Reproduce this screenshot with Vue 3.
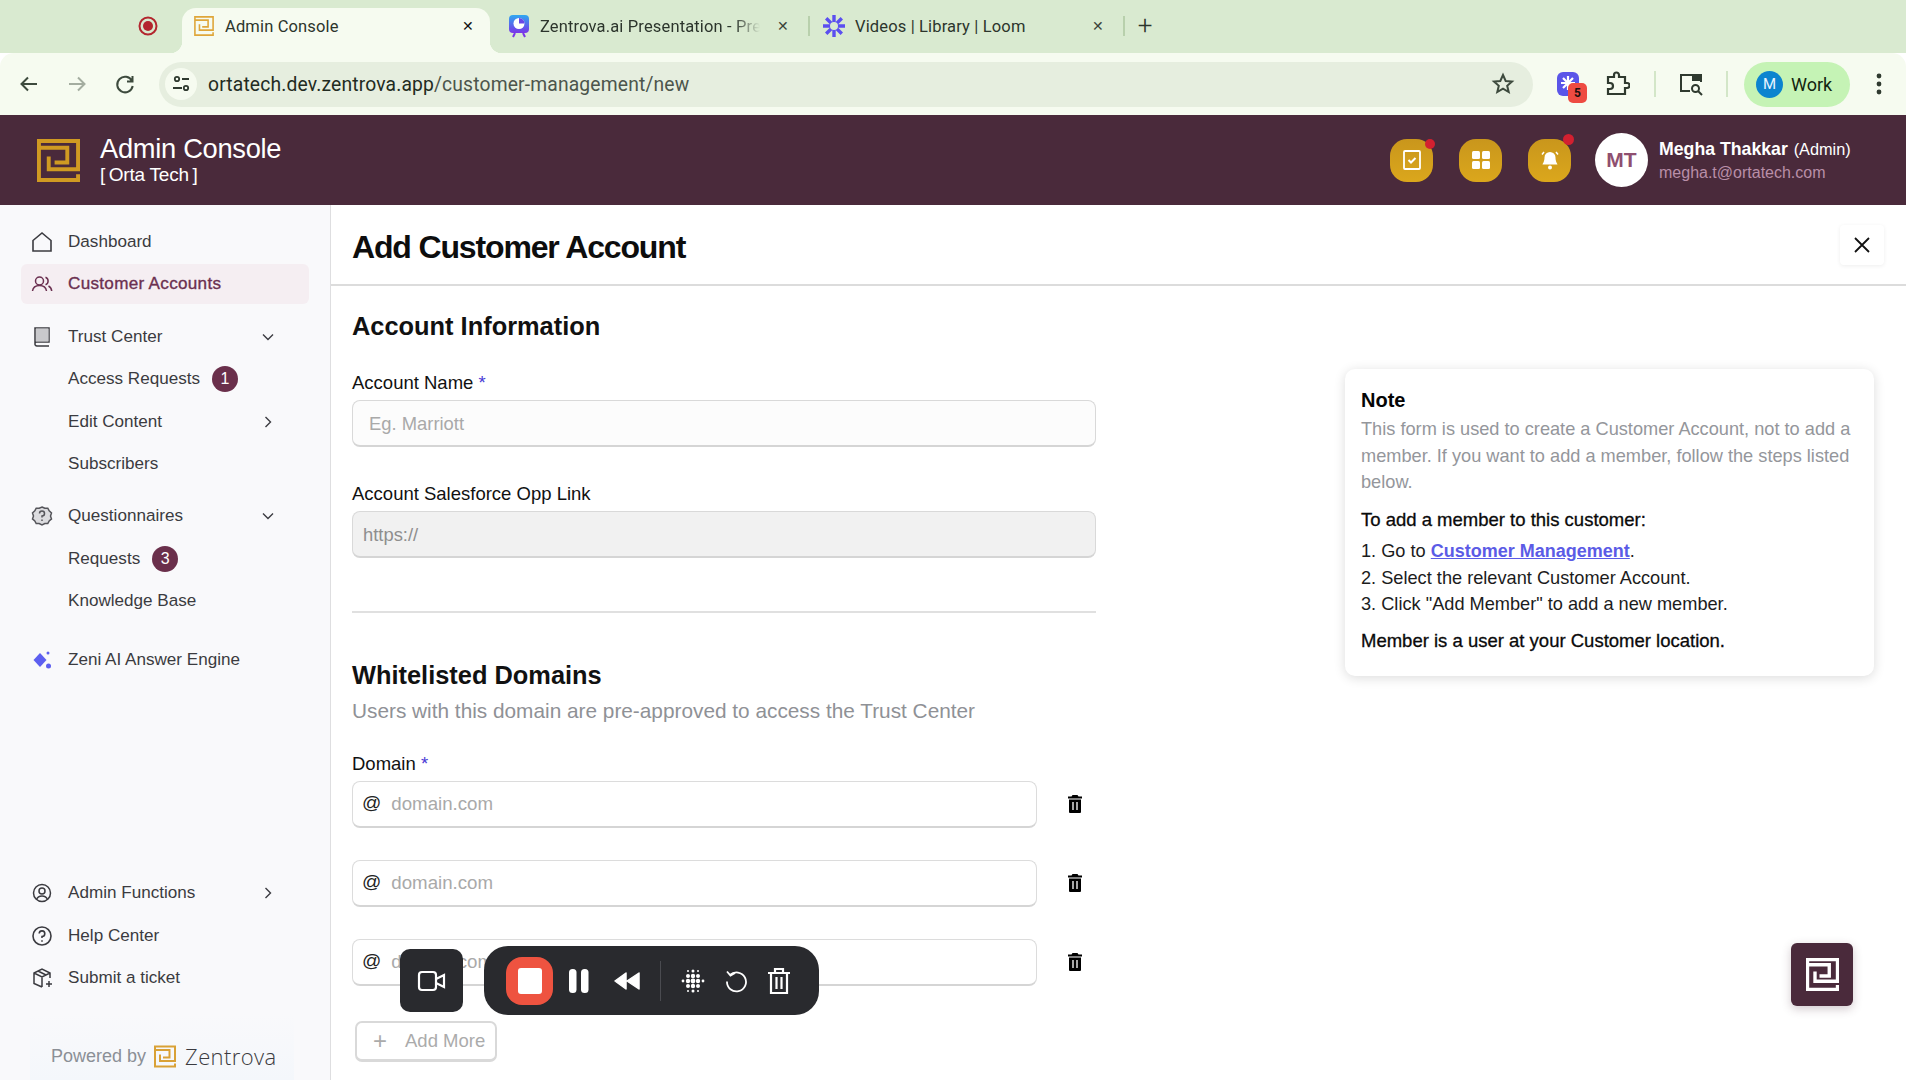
<script setup>
const logoD = 'M2 9V2H42V31H12V18M2 9H31V24H18M2 9V42H42V36';
const domains = [1, 2, 3];
</script>

<template>
  <div class="page">
    <div class="tabstrip">
      <svg class="rec" width="20" height="20" viewBox="0 0 20 20"><circle cx="10" cy="10" r="8.5" fill="none" stroke="#b3262e" stroke-width="2"/><circle cx="10" cy="10" r="5" fill="#b3262e"/></svg>
      <div class="tab active">
        <svg class="fav" width="20" height="20" viewBox="0 0 44 44" fill="none" stroke="#dfa63a" stroke-width="3.5"><path :d="logoD"/></svg>
        <span class="tab-text">Admin Console</span>
        <span class="x dark">✕</span>
      </div>
      <div class="tab t2">
        <svg class="fav" width="22" height="24" viewBox="0 0 22 24"><defs><linearGradient id="g1" x1="0" y1="0" x2="0" y2="1"><stop offset="0" stop-color="#2fa8f0"/><stop offset="1" stop-color="#7a35e8"/></linearGradient></defs><rect x="1" y="1" width="20" height="18" rx="4" fill="url(#g1)"/><circle cx="11" cy="9.5" r="5.5" fill="#fff"/><path d="M11 9.5V4a5.5 5.5 0 0 1 5.5 5.5z" fill="#6a47e6"/><path d="M7 19l-2 4M15 19l2 4" stroke="#7a35e8" stroke-width="2"/></svg>
        <span class="tab-text fade">Zentrova.ai Presentation - Pre</span>
        <span class="x">✕</span>
      </div>
      <i class="sep"></i>
      <div class="tab t3">
        <svg class="fav" width="24" height="24" viewBox="0 0 24 24" fill="none" stroke="#5b4ff0" stroke-width="3.4"><path d="M12 1v22M1 12h22M4.2 4.2l15.6 15.6M19.8 4.2L4.2 19.8"/><circle cx="12" cy="12" r="4" fill="#d9ead0" stroke="none"/></svg>
        <span class="tab-text">Videos | Library | Loom</span>
        <span class="x">✕</span>
      </div>
      <i class="sep"></i>
      <span class="plus">+</span>
    </div>

    <div class="toolbar">
      <svg class="tb first" width="24" height="24" viewBox="0 0 24 24" fill="none" stroke="#3d4a3d" stroke-width="2"><path d="M20 12H5M11 5.5L4.5 12l6.5 6.5"/></svg>
      <svg class="tb" width="24" height="24" viewBox="0 0 24 24" fill="none" stroke="#a4ada0" stroke-width="2"><path d="M4 12h15M13 5.5l6.500 6.500-6.500 6.500"/></svg>
      <svg class="tb" width="24" height="24" viewBox="0 0 24 24" fill="none" stroke="#3d4a3d" stroke-width="2"><path d="M19 9A7.800 7.800 0 1 0 19.700 14M19.500 4v5.500H14"/></svg>
      <div class="omnibox">
        <span class="tune"><svg width="20" height="20" viewBox="0 0 20 20" fill="none" stroke="#2f3a2f" stroke-width="1.800"><circle cx="6" cy="5" r="2.200"/><path d="M11 5h7M2 14h9"/><circle cx="15" cy="14" r="2.200"/></svg></span>
        <span class="url">ortatech.dev.zentrova.app<span class="url-rest">/customer-management/new</span></span>
        <svg class="star" width="24" height="24" viewBox="0 0 24 24" fill="none" stroke="#3d4a3d" stroke-width="2"><path d="M12 3l2.700 6 6.300.6-4.800 4.200 1.500 6.200L12 16.700 6.300 20l1.500-6.200L3 9.600 9.300 9z"/></svg>
      </div>
      <div class="ext">
        <svg width="24" height="24" viewBox="0 0 24 24"><rect width="22" height="24" rx="6" fill="#5a55e8"/><path d="M11 4v14M4 11h14M6 6l10 10M16 6L6 16" stroke="#fff" stroke-width="2.200"/></svg>
        <span class="ext-badge">5</span>
      </div>
      <svg class="puzzle" width="24" height="26" viewBox="0 0 24 26" fill="none" stroke="#2f3a2f" stroke-width="2.200"><path d="M2 6h6V4a2.500 2.500 0 0 1 5 0v2h6v6h2a2.500 2.500 0 0 1 0 5h-2v6H2v-5h2a2.500 2.500 0 0 0 0-6H2z"/></svg>
      <i class="sep s1"></i>
      <svg class="media" width="24" height="24" viewBox="0 0 24 24" fill="none" stroke="#2f3a2f" stroke-width="2"><path d="M11 19H2V3h20v7"/><rect x="14" y="3" width="8" height="5" fill="#2f3a2f"/><circle cx="16.500" cy="16.500" r="3.500"/><path d="M19 19l4 4"/></svg>
      <i class="sep s2"></i>
      <div class="profile"><span class="pm">M</span><span class="pw">Work</span></div>
      <svg class="dots" width="6" height="22" viewBox="0 0 6 22" fill="#2f3a2f"><circle cx="3" cy="3" r="2.400"/><circle cx="3" cy="11" r="2.400"/><circle cx="3" cy="19" r="2.400"/></svg>
    </div>

    <header class="appbar">
      <svg class="applogo" width="43" height="45" viewBox="0 0 44 44" fill="none" stroke="#d09a22" stroke-width="4"><path :d="logoD"/></svg>
      <div class="appname">
        <div class="an1">Admin Console</div>
        <div class="an2">[&#8201;Orta Tech&#8201;]</div>
      </div>
      <div class="hicons">
        <span class="hb dot1"><svg width="20" height="22" viewBox="0 0 20 22" fill="none" stroke="#fff" stroke-width="1.800"><rect x="2" y="2" width="16" height="18" rx="1"/><path d="M6.500 11l2.500 2.500 4.500-4.500" stroke-width="2"/></svg></span>
        <span class="hb"><svg width="20" height="20" viewBox="0 0 20 20" fill="#fff"><rect x="1" y="1" width="8" height="8" rx="1.500"/><rect x="11" y="1" width="8" height="8" rx="1.500"/><rect x="1" y="11" width="8" height="8" rx="1.500"/><rect x="11" y="11" width="8" height="8" rx="1.500"/></svg></span>
        <span class="hb dot2"><svg width="22" height="22" viewBox="0 0 22 22" fill="#fff"><path d="M11 3a5.500 5.500 0 0 0-5.500 5.500c0 4-1.500 5.500-2 7h15c-.5-1.500-2-3-2-7A5.500 5.500 0 0 0 11 3z"/><circle cx="11" cy="18.500" r="2"/><path d="M3 5.500L5 3M19 5.500L17 3" stroke="#fff" stroke-width="1.500"/></svg></span>
      </div>
      <div class="avatar">MT</div>
      <div class="user">
        <div class="uname"><b>Megha Thakkar</b> <span>(Admin)</span></div>
        <div class="umail">megha.t@ortatech.com</div>
      </div>
    </header>

    <div class="body">
      <aside class="side">
        <div class="item">
          <svg class="ic" width="22" height="22" viewBox="0 0 22 22" fill="none" stroke="#3b3b40" stroke-width="1.600"><path d="M2 20V9.500L11 2l9 7.500V20z"/></svg>
          <span>Dashboard</span>
        </div>
        <div class="item on">
          <svg class="ic" width="22" height="22" viewBox="0 0 22 22" fill="none" stroke="#6b3050" stroke-width="1.500"><circle cx="8.500" cy="8" r="4"/><path d="M1.500 18c.5-3.500 3.500-5.500 7-5.500s6.500 2 7 5.500M14.500 4.200a4 4 0 0 1 0 7.500M17.500 13c1.800 1 3 2.800 3.200 5"/></svg>
          <span>Customer Accounts</span>
        </div>
        <div class="item g1">
          <svg class="ic" width="22" height="22" viewBox="0 0 22 22" fill="none" stroke="#3b3b40" stroke-width="1.500"><path d="M4 18V2h14v14H5.500A1.500 1.500 0 0 0 4 17.500 2 2 0 0 0 6 20h12" fill="none"/><path d="M5 2.500h12.500v13H5z" fill="#c9c9cc" stroke="none"/></svg>
          <span>Trust Center</span>
          <svg class="chev" width="14" height="14" viewBox="0 0 14 14" fill="none" stroke="#3b3b40" stroke-width="1.400"><path d="M2 4.500l5 5 5-5"/></svg>
        </div>
        <div class="item">
          <span>Access Requests</span><span class="badge">1</span>
        </div>
        <div class="item">
          <span>Edit Content</span>
          <svg class="chev" width="14" height="14" viewBox="0 0 14 14" fill="none" stroke="#3b3b40" stroke-width="1.400"><path d="M4.500 2l5 5-5 5"/></svg>
        </div>
        <div class="item"><span>Subscribers</span></div>
        <div class="item g1">
          <svg class="ic" width="22" height="22" viewBox="0 0 22 22" fill="none" stroke="#55555a" stroke-width="1.500"><path d="M11 2l2.800 1.300 3-.1 1.400 2.700 2.300 2-1 3 1 3-2.300 2-1.400 2.700-3-.1L11 20l-2.800-1.500-3 .1-1.400-2.700-2.300-2 1-3-1-3 2.300-2 1.400-2.700 3 .1z" fill="#dcdcdf"/><path d="M8.500 8.500A2.500 2.500 0 1 1 11 11v1.500M11 14.500v1.500"/></svg>
          <span>Questionnaires</span>
          <svg class="chev" width="14" height="14" viewBox="0 0 14 14" fill="none" stroke="#3b3b40" stroke-width="1.400"><path d="M2 4.500l5 5 5-5"/></svg>
        </div>
        <div class="item"><span>Requests</span><span class="badge">3</span></div>
        <div class="item"><span>Knowledge Base</span></div>
        <div class="item g2">
          <svg class="ic" width="22" height="22" viewBox="0 0 22 22" fill="#5d5ff0"><path d="M9 4l6.500 7L9 18l-6.500-7z"/><circle cx="17" cy="4" r="1.500"/><circle cx="17.500" cy="17" r="2.500"/></svg>
          <span>Zeni AI Answer Engine</span>
        </div>

        <div class="side-bottom">
          <div class="item">
            <svg class="ic" width="22" height="22" viewBox="0 0 22 22" fill="none" stroke="#3b3b40" stroke-width="1.500"><circle cx="11" cy="11" r="8.500"/><circle cx="11" cy="9" r="3"/><path d="M5.500 17.500c1-2.500 3-3.500 5.500-3.500s4.500 1 5.500 3.500"/></svg>
            <span>Admin Functions</span>
            <svg class="chev" width="14" height="14" viewBox="0 0 14 14" fill="none" stroke="#3b3b40" stroke-width="1.400"><path d="M4.500 2l5 5-5 5"/></svg>
          </div>
          <div class="item">
            <svg class="ic" width="22" height="22" viewBox="0 0 22 22" fill="none" stroke="#3b3b40" stroke-width="1.600"><circle cx="11" cy="11" r="9"/><path d="M8.200 8.500A2.800 2.800 0 1 1 11 11.500v1.500M11 15.200v1.500"/></svg>
            <span>Help Center</span>
          </div>
          <div class="item">
            <svg class="ic" width="22" height="22" viewBox="0 0 22 22" fill="none" stroke="#3b3b40" stroke-width="1.500"><path d="M11 20l-8-3.500V6l8-4 8 4v5M3 6l8 4 8-4M11 10v10M7 4l8 4M18 14v6M15 17h6"/></svg>
            <span>Submit a ticket</span>
          </div>
          <div class="powered">
            <span class="pb">Powered by</span>
            <svg width="22" height="23" viewBox="0 0 44 44" fill="none" stroke="#d9a136" stroke-width="4"><path :d="logoD"/></svg>
            <span class="zt">Zentrova</span>
          </div>
        </div>
      </aside>

      <main class="main">
        <div class="titlebar">
          <h1>Add Customer Account</h1>
          <button class="closebtn"><svg width="18" height="18" viewBox="0 0 18 18" fill="none" stroke="#111" stroke-width="1.800"><path d="M2 2l14 14M16 2L2 16"/></svg></button>
        </div>
        <div class="columns">
          <form class="form">
            <h2 class="h-a">Account Information</h2>
            <label class="lab l1">Account Name <em>*</em></label>
            <input class="inp name" placeholder="Eg. Marriott" />
            <label class="lab l2">Account Salesforce Opp Link</label>
            <input class="inp link" placeholder="https://" />
            <hr class="rule" />
            <h2 class="h-b">Whitelisted Domains</h2>
            <p class="sub">Users with this domain are pre-approved to access the Trust Center</p>
            <label class="lab l3">Domain <em>*</em></label>
            <div v-for="d in domains" :key="d" class="drow">
              <div class="dfield"><span class="at">@</span><input class="dinp" placeholder="domain.com" /></div>
              <svg class="trash" width="16" height="18" viewBox="0 0 16 18"><path d="M5.500 0h5l1 1.500H15v2H1v-2h3.500z" fill="#000"/><path d="M2 4.500h12V17a1 1 0 0 1-1 1H3a1 1 0 0 1-1-1z" fill="#000"/><path d="M6 7v8M10 7v8" stroke="#fff" stroke-width="1.300"/></svg>
            </div>
            <button type="button" class="addmore"><span class="ap">+</span><span>Add More</span></button>
          </form>
          <section class="note">
            <h3>Note</h3>
            <p class="ngray">This form is used to create a Customer Account, not to add a member. If you want to add a member, follow the steps listed below.</p>
            <p class="nb n1">To add a member to this customer:</p>
            <ol>
              <li>1. Go to <a>Customer Management</a>.</li>
              <li>2. Select the relevant Customer Account.</li>
              <li>3. Click "Add Member" to add a new member.</li>
            </ol>
            <p class="nb n2">Member is a user at your Customer location.</p>
          </section>
        </div>
      </main>
    </div>

    <div class="cam"><svg width="30" height="24" viewBox="0 0 30 24" fill="none" stroke="#fff" stroke-width="2.200"><rect x="2" y="3" width="17" height="18" rx="3"/><path d="M19 10l8-4v12l-8-4"/></svg></div>
    <div class="rectools">
      <span class="stop"><i></i></span>
      <svg width="22" height="26" viewBox="0 0 22 26" fill="#fff"><rect x="1" y="1" width="7.500" height="24" rx="3.500"/><rect x="13" y="1" width="7.500" height="24" rx="3.500"/></svg>
      <svg class="rw" width="28" height="20" viewBox="0 0 28 20" fill="#fff"><path d="M13 2v16L2 10zM26 2v16L14 10z" stroke="#fff" stroke-width="1.500" stroke-linejoin="round"/></svg>
      <i class="rsep"></i>
      <svg class="dotsg" width="24" height="24" viewBox="0 0 24 24" fill="#fff"><circle cx="12" cy="2" r="1.500"/><circle cx="7" cy="2" r="1"/><circle cx="17" cy="2" r="1"/><circle cx="7" cy="7" r="2"/><circle cx="12" cy="7" r="2.200"/><circle cx="17" cy="7" r="2"/><circle cx="2" cy="12" r="1.400"/><circle cx="7" cy="12" r="2.200"/><circle cx="12" cy="12" r="2.400"/><circle cx="17" cy="12" r="2.200"/><circle cx="22" cy="12" r="1.400"/><circle cx="7" cy="17" r="2"/><circle cx="12" cy="17" r="2.200"/><circle cx="17" cy="17" r="2"/><circle cx="7" cy="22" r="1"/><circle cx="12" cy="22" r="1.500"/><circle cx="17" cy="22" r="1"/></svg>
      <svg class="undo" width="22" height="26" viewBox="0 0 22 26" fill="none" stroke="#fff" stroke-width="1.800"><path d="M5 7a9.500 9.500 0 1 1-3 6.500M2 3.500l3.500 4L10 5"/></svg>
      <svg class="del" width="24" height="28" viewBox="0 0 24 28" fill="none" stroke="#fff" stroke-width="2.200"><path d="M1 6h22M8 6V2h8v4M4 6v20h16V6M9.500 10v12M14.500 10v12"/></svg>
    </div>
    <div class="fab"><svg width="33" height="33" viewBox="0 0 44 44" fill="none" stroke="#fff" stroke-width="4.500"><path :d="logoD"/></svg></div>
  </div>
</template>

<style>
html, body { margin: 0; background: #fff; }
</style>

<style scoped>
* { box-sizing: border-box; }
.page { position: relative; width: 1906px; height: 1080px; overflow: hidden; display: flex; flex-direction: column; font-family: "Liberation Sans", Arial, sans-serif; color: #111; background: #fff; }

.tabstrip { height: 53px; flex: none; background: #d9ead0; display: flex; align-items: flex-end; padding-left: 138px; font-family: Roboto, sans-serif; color: #2c352c; }
.rec { align-self: flex-start; margin-top: 16px; margin-right: 24px; }
.tab { height: 45px; display: flex; align-items: center; font-size: 16.500px; letter-spacing: .15px; padding-bottom: 9px; flex: none; }
.tab.active { width: 308px; background: #f6fbf0; border-radius: 14px 14px 0 0; padding-left: 12px; position: relative; }
.tab.active::before, .tab.active::after { content: ""; position: absolute; bottom: 0; width: 12px; height: 12px; }
.tab.active::before { left: -12px; background: radial-gradient(circle at 0 0, #d9ead0 12px, #f6fbf0 12.5px); }
.tab.active::after { right: -12px; background: radial-gradient(circle at 100% 0, #d9ead0 12px, #f6fbf0 12.5px); }
.fav { flex: none; margin-right: 11px; }
.tab-text { white-space: nowrap; overflow: hidden; flex: 1; }
.fade { -webkit-mask-image: linear-gradient(90deg, #000 88%, transparent); mask-image: linear-gradient(90deg, #000 88%, transparent); }
.x { font-size: 14px; width: 20px; text-align: center; flex: none; color: #3b443b; }
.x.dark { color: #111; margin-right: 12px; }
.t2 { width: 300px; margin-left: 18px; }
.t2 .fav { margin-right: 10px; }
.t2 .tab-text { flex: none; width: 220px; }
.t2 .x { margin-left: 13px; }
.t3 { width: 313px; padding-left: 12px; padding-right: 15px; }
.t3 .fav { margin-right: 9px; }
.sep { width: 2px; height: 20px; background: #b8d0ac; flex: none; align-self: flex-start; margin-top: 16px; }
.plus { font-size: 26px; line-height: 1; width: 40px; text-align: center; align-self: flex-start; margin-top: 12px; font-weight: 300; }

.toolbar { height: 62px; flex: none; background: #f6fbf0; display: flex; align-items: center; border-radius: 14px 14px 0 0; position: relative; }
.tb { flex: none; margin-right: 24px; }
.tb.first { margin-left: 17px; }
.toolbar .omnibox { margin-left: -2px; }
.omnibox { width: 1374px; height: 45px; border-radius: 23px; background: #e6eedf; display: flex; align-items: center; padding-left: 6px; flex: none; }
.tune { width: 32px; height: 32px; border-radius: 50%; background: #f6fbf0; display: flex; align-items: center; justify-content: center; flex: none; }
.url { font-family: Roboto, sans-serif; font-size: 19.300px; color: #222b22; margin-left: 11px; flex: 1; letter-spacing: .15px; white-space: nowrap; }
.url-rest { color: #4c554c; }
.star { margin-right: 18px; flex: none; }
.ext { position: relative; width: 26px; height: 24px; margin-left: 24px; flex: none; }
.ext-badge { position: absolute; left: 11px; top: 11px; width: 19px; height: 20px; border-radius: 5px; background: #ee4b42; color: #20100f; font: 700 12px/20px Roboto, sans-serif; text-align: center; }
.puzzle { margin-left: 23px; flex: none; }
.s1 { align-self: center; margin: 0 0 0 24px; height: 26px; background: #d3e6c8; }
.media { margin-left: 23px; flex: none; }
.s2 { align-self: center; margin: 0 0 0 23px; height: 26px; background: #d3e6c8; }
.profile { margin-left: 16px; width: 106px; height: 45px; border-radius: 23px; background: #c5f3b5; display: flex; align-items: center; padding-left: 12px; flex: none; font-family: Roboto, sans-serif; }
.pm { width: 27px; height: 27px; border-radius: 50%; background: #0b84cf; color: #e8f4ff; font-size: 15px; line-height: 27px; text-align: center; }
.pw { font-size: 18px; margin-left: 8px; color: #12240f; }
.dots { margin-left: 26px; flex: none; }

.appbar { height: 90px; flex: none; background: #4a2a3b; display: flex; align-items: center; padding-left: 37px; }
.applogo { flex: none; margin-top: 1px; }
.appname { margin-left: 20px; margin-top: -3px; color: #fff; }
.an1 { font-size: 27.300px; line-height: 32px; letter-spacing: -.3px; }
.an2 { font-size: 19px; line-height: 20px; letter-spacing: -.2px; }
.hicons { margin-left: auto; display: flex; gap: 26px; }
.hb { width: 43px; height: 43px; border-radius: 17px; background: linear-gradient(#c9961c, #dba71c); display: flex; align-items: center; justify-content: center; position: relative; }
.dot1::after, .dot2::after { content: ""; position: absolute; width: 10px; height: 10px; border-radius: 50%; background: #d32030; right: -2px; top: 0; }
.dot2::after { top: -5px; right: -3px; width: 11px; height: 11px; }
.avatar { width: 53px; height: 54px; border-radius: 50%; background: #fff; color: #8f4f70; font-size: 21px; font-weight: 700; display: flex; align-items: center; justify-content: center; margin-left: 24px; flex: none; }
.user { margin-left: 11px; width: 247px; color: #fff; }
.uname { font-size: 17.700px; line-height: 24px; margin-top: 2px; white-space: nowrap; }
.uname span { font-size: 16.300px; margin-left: 1px; }
.umail { font-size: 16px; line-height: 24px; color: #b98fa8; margin-top: 0; }

.body { flex: 1; display: flex; min-height: 0; }
.side { width: 331px; flex: none; border-right: 1px solid #dedee0; background: #f9f9fb; padding-top: 17px; display: flex; flex-direction: column; color: #3b3b40; font-size: 17.100px; }
.item { height: 40px; margin: 0 21px 2.400px 21px; padding-left: 47px; display: flex; align-items: center; position: relative; flex: none; }
.item.on { background: #f5eef2; color: #6b3050; border-radius: 6px; -webkit-text-stroke: .35px #6b3050; letter-spacing: .3px; }
.item.g1 { margin-top: 10px; }
.item.g2 { margin-top: 16px; }
.ic { position: absolute; left: 10px; top: 9px; }
.chev { position: absolute; left: 240px; top: 13px; }
.badge { width: 26px; height: 26px; border-radius: 50%; background: #6a2f4b; color: #fff; font-size: 16px; text-align: center; line-height: 26px; margin-left: 12px; }
.side-bottom { margin-top: auto; }
.powered { height: 66px; margin-top: 16px; background: linear-gradient(#f9f9fb, #f4f7fb); margin-left: 30px; margin-right: 36px; display: flex; align-items: center; padding-left: 21px; padding-top: 22px; padding-bottom: 4px; }
.pb { color: #8b8f96; font-size: 18px; margin-right: 8px; white-space: nowrap; }
.zt { font-family: "Open Sans", sans-serif; font-weight: 300; font-size: 22px; color: #3b3b40; margin-left: 9px; letter-spacing: .4px; }

.main { flex: 1; min-width: 0; }
.titlebar { height: 81px; border-bottom: 2px solid #dcdcdc; display: flex; align-items: center; padding-left: 21px; position: relative; }
h1 { margin: 0; font-size: 32px; letter-spacing: -1.150px; font-weight: 700; line-height: 40px; margin-top: 4px; color: #0d0d0d; }
.closebtn { position: absolute; right: 22px; top: 20px; width: 44px; height: 40px; background: #fff; border: 0; border-radius: 4px; box-shadow: 0 1px 4px rgba(0,0,0,.07); display: flex; align-items: center; justify-content: center; padding: 0; }
.columns { display: flex; align-items: flex-start; }
.form { width: 765px; padding-left: 21px; flex: none; display: flex; flex-direction: column; }
h2 { margin: 0; font-size: 25.400px; line-height: 30px; font-weight: 700; color: #111; }
.h-a { margin-top: 25px; }
.h-b { margin-top: 47px; }
.lab { display: block; font-size: 18.500px; line-height: 24px; color: #111; height: 24px; }
.lab em { color: #4a3bd6; font-style: normal; }
.l1 { margin-top: 30px; }
.l2 { margin-top: 35px; }
.l3 { margin-top: 29px; }
.inp { display: block; width: 744px; height: 47px; margin-top: 5px; border: 1px solid #d9d9d9; border-bottom: 2px solid #d5d5d5; border-radius: 8px; font: 18.400px "Liberation Sans", Arial, sans-serif; padding: 2px 16px 0; outline: 0; }
.inp::placeholder, .dinp::placeholder { color: #a9a9a9; opacity: 1; }
.name { background: #fcfcfc; }
.link { background: #f1f1f1; padding-left: 10px; }
.link::placeholder { color: #8e8e8e; }
.rule { width: 744px; height: 2px; border: 0; background: #e0e0e0; margin: 53px 0 0; }
.sub { margin: 9px 0 0; font-size: 20.800px; line-height: 24px; color: #8f9196; }
.drow { display: flex; align-items: center; margin-top: 32px; }
.l3 + .drow { margin-top: 5px; }
.dfield { width: 685px; height: 47px; border: 1px solid #dcdcdc; border-bottom: 2px solid #d5d5d5; border-radius: 8px; display: flex; align-items: center; padding-left: 9px; background: #fff; }
.at { font-size: 19px; margin-right: 10px; margin-top: -3px; color: #222; }
.dinp { border: 0; outline: 0; font: 18.700px "Liberation Sans", Arial, sans-serif; flex: 1; background: transparent; padding: 0; }
.trash { margin-left: 30px; flex: none; margin-top: -2px; }
.addmore { width: 142px; height: 41px; margin: 35px 0 0 3px; border: 2px solid #d9d9d9; border-bottom-width: 3px; border-radius: 7px; background: #fff; color: #ababab; font: 18.500px "Liberation Sans", Arial, sans-serif; display: flex; align-items: center; padding: 0 0 0 16px; }
.ap { font-size: 24px; font-weight: 300; margin-right: 18px; line-height: 1; }
.note { width: 529px; margin: 83px 0 0 249px; background: #fff; border-radius: 10px; box-shadow: 0 2px 12px rgba(0,0,0,.14); padding: 18px 16px 0; height: 307px; flex: none; font-size: 18.200px; line-height: 26.500px; color: #1c1c1c; }
h3 { margin: 0; font-size: 20px; line-height: 26px; font-weight: 700; color: #050505; }
.ngray { margin: 3px 0 0; color: #94969b; }
.nb { margin: 0; color: #0a0a0a; font-size: 18.500px; -webkit-text-stroke: .3px #0a0a0a; }
.n1 { margin-top: 11px; }
.n2 { margin-top: 10px; }
ol { margin: 5px 0 0; padding: 0; list-style: none; }
a { color: #5b5be6; font-weight: 700; font-size: 18px; text-decoration: underline; }

.cam { position: absolute; left: 400px; top: 949px; width: 63px; height: 63px; border-radius: 10px; background: #292a2e; display: flex; align-items: center; justify-content: center; }
.rectools { position: absolute; left: 484px; top: 946px; width: 335px; height: 69px; border-radius: 24px; background: #292a2e; display: flex; align-items: center; padding-left: 22px; }
.stop { width: 47px; height: 48px; border-radius: 16px; background: #ee5340; display: flex; align-items: center; justify-content: center; flex: none; }
.stop i { width: 24px; height: 26px; background: #fff; border-radius: 3px; }
.rectools > svg { flex: none; margin-left: 15px; }
.rectools > .rw { margin-left: 23px; }
.rsep { width: 1px; height: 40px; background: #4a4b50; margin-left: 19px; flex: none; }
.rectools > .dotsg { margin-left: 20px; }
.rectools > .undo { margin-left: 20px; }
.rectools > .del { margin-left: 20px; }
.fab { position: absolute; left: 1791px; top: 943px; width: 62px; height: 63px; border-radius: 6px; background: #4a2a3b; box-shadow: 0 3px 10px rgba(74,42,59,.25); display: flex; align-items: center; justify-content: center; }
</style>
